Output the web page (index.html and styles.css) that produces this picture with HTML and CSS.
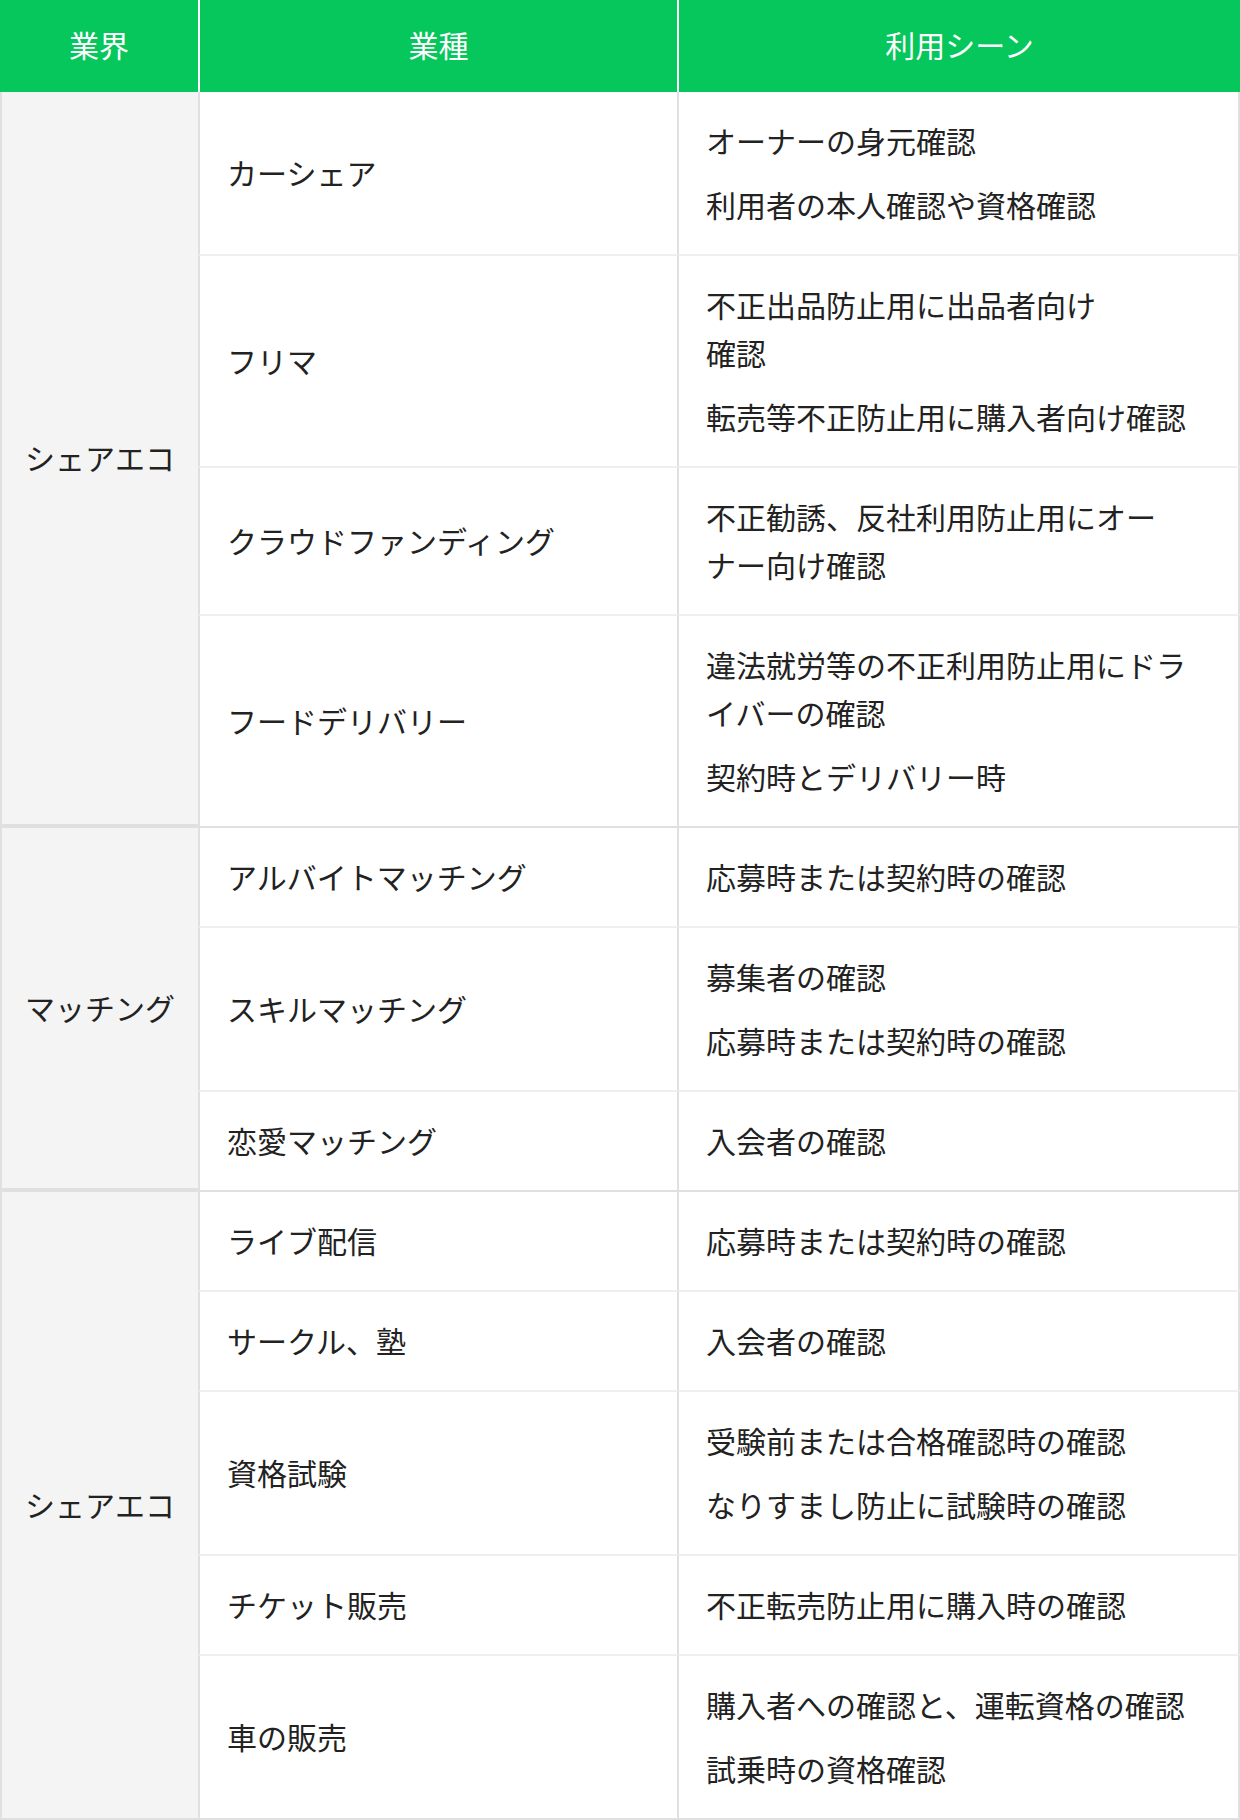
FILE: index.html
```html
<!DOCTYPE html>
<html lang="ja">
<head>
<meta charset="utf-8">
<title>利用シーン</title>
<link rel="stylesheet" href="styles.css">
</head>
<body>
<table class="usecase">
  <colgroup>
    <col class="c-industry">
    <col class="c-type">
    <col class="c-scene">
  </colgroup>
  <thead>
    <tr>
      <th>業界</th>
      <th>業種</th>
      <th>利用シーン</th>
    </tr>
  </thead>
  <tbody>
    <tr class="group-start first-group">
      <td class="industry" rowspan="4">シェアエコ</td>
      <td class="type">カーシェア</td>
      <td class="scene"><p>オーナーの身元確認</p><p>利用者の本人確認や資格確認</p></td>
    </tr>
    <tr>
      <td class="type">フリマ</td>
      <td class="scene"><p>不正出品防止用に出品者向け<br>確認</p><p>転売等不正防止用に購入者向け確認</p></td>
    </tr>
    <tr>
      <td class="type">クラウドファンディング</td>
      <td class="scene"><p>不正勧誘、反社利用防止用にオーナー向け確認</p></td>
    </tr>
    <tr>
      <td class="type">フードデリバリー</td>
      <td class="scene"><p>違法就労等の不正利用防止用にドライバーの確認</p><p>契約時とデリバリー時</p></td>
    </tr>

    <tr class="group-start">
      <td class="industry" rowspan="3">マッチング</td>
      <td class="type">アルバイトマッチング</td>
      <td class="scene"><p>応募時または契約時の確認</p></td>
    </tr>
    <tr>
      <td class="type">スキルマッチング</td>
      <td class="scene"><p>募集者の確認</p><p>応募時または契約時の確認</p></td>
    </tr>
    <tr>
      <td class="type">恋愛マッチング</td>
      <td class="scene"><p>入会者の確認</p></td>
    </tr>

    <tr class="group-start last-group">
      <td class="industry" rowspan="5">シェアエコ</td>
      <td class="type">ライブ配信</td>
      <td class="scene"><p>応募時または契約時の確認</p></td>
    </tr>
    <tr>
      <td class="type">サークル、塾</td>
      <td class="scene"><p>入会者の確認</p></td>
    </tr>
    <tr>
      <td class="type">資格試験</td>
      <td class="scene"><p>受験前または合格確認時の確認</p><p>なりすまし防止に試験時の確認</p></td>
    </tr>
    <tr>
      <td class="type">チケット販売</td>
      <td class="scene"><p>不正転売防止用に購入時の確認</p></td>
    </tr>
    <tr class="last-row">
      <td class="type">車の販売</td>
      <td class="scene"><p>購入者への確認と、運転資格の確認</p><p>試乗時の資格確認</p></td>
    </tr>
  </tbody>
</table>
</body>
</html>
```

FILE: styles.css
```css
html, body {
  margin: 0;
  padding: 0;
  background: #ffffff;
}

body {
  font-family: "Noto Sans CJK JP", "Noto Sans", sans-serif;
  color: #222222;
}

.usecase {
  width: 1240px;
  table-layout: fixed;
  border-collapse: separate;
  border-spacing: 0;
  font-size: 30px;
  line-height: 48px;
  line-break: strict;
}

.c-industry { width: 198px; }
.c-type { width: 479px; }
.c-scene { width: 563px; }

.usecase th {
  height: 92px;
  padding: 0 0 4px;
  box-sizing: border-box;
  background: #05c75c;
  color: #ffffff;
  font-weight: 400;
  text-align: center;
  vertical-align: middle;
}

.usecase th + th {
  border-left: 2px solid #ffffff;
}

.usecase td {
  vertical-align: middle;
  padding: 24px 27px 26px;
  text-align: left;
}

.usecase td.industry {
  background: #f4f4f4;
  border-left: 2px solid #e0e0e0;
  border-bottom: 2px solid #e0e0e0;
  text-align: center;
  padding: 24px 0 26px;
}

.usecase td.type {
  border-left: 2px solid #e0e0e0;
  border-top: 2px solid #efefef;
}

.usecase td.scene {
  border-left: 2px solid #e0e0e0;
  border-right: 2px solid #e0e0e0;
  border-top: 2px solid #efefef;
}

.usecase tr.group-start td {
  border-top: 2px solid #e0e0e0;
}

.usecase tr.first-group td {
  border-top: 0;
}

.usecase tr.last-row td {
  border-bottom: 2px solid #e0e0e0;
}

.usecase p {
  margin: 0;
}

.usecase p + p {
  margin-top: 16px;
}
```
